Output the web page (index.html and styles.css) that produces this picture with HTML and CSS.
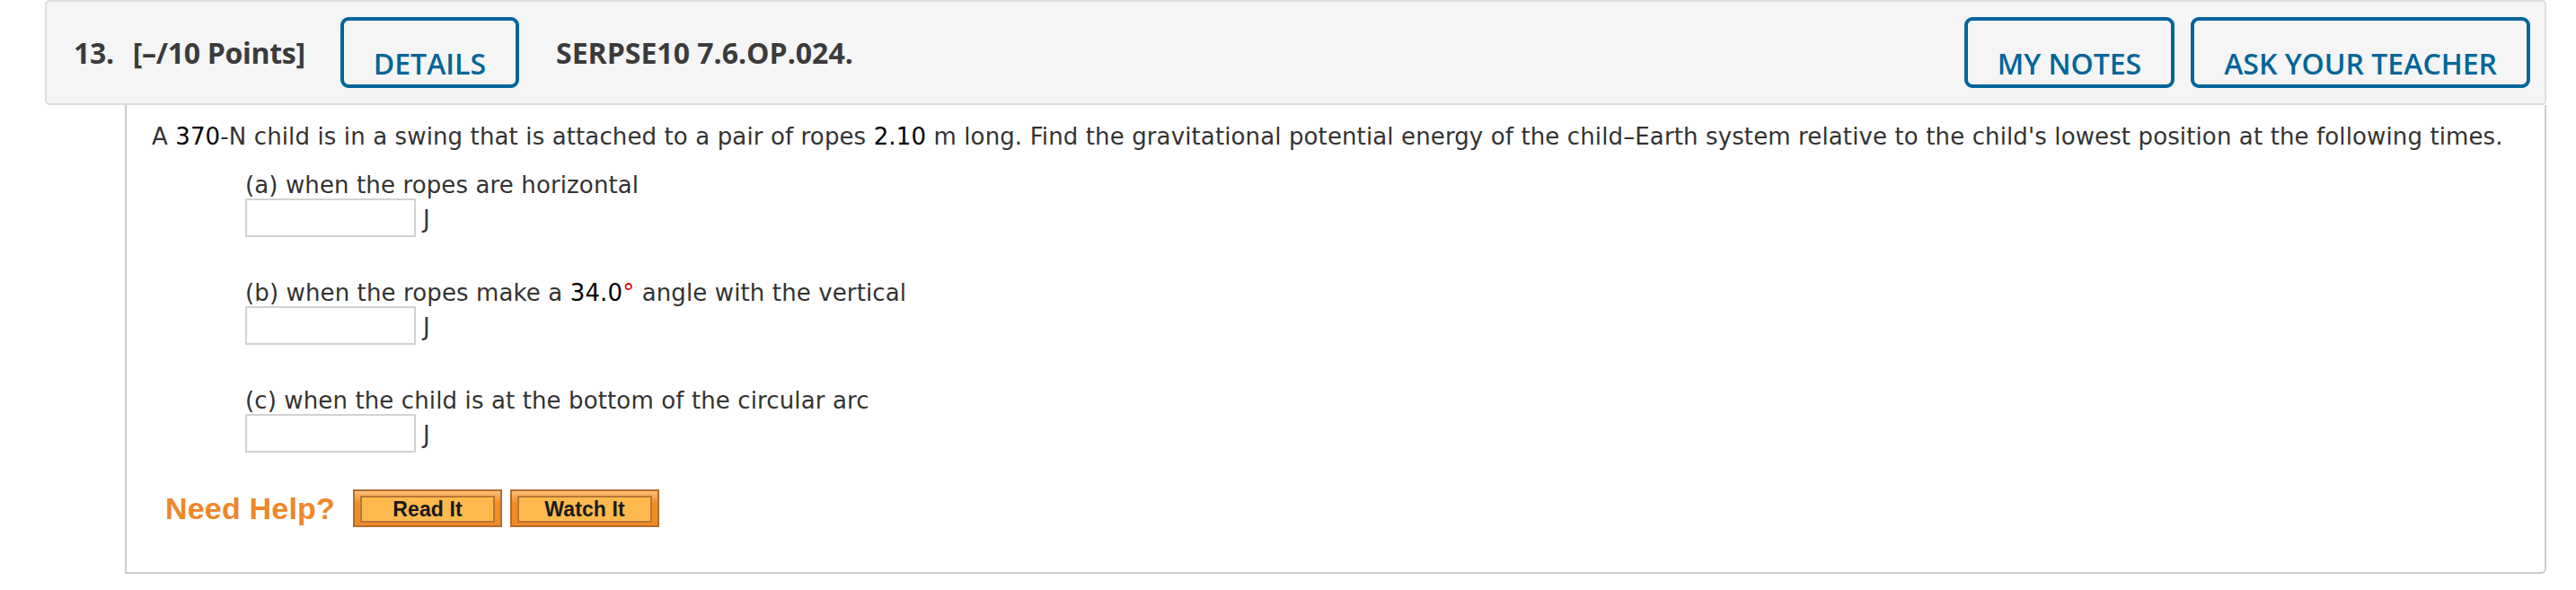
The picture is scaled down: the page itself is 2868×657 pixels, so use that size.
FILE: index.html
```html
<!DOCTYPE html>
<html lang="en">
<head>
<meta charset="utf-8">
<title>Question 13</title>
<link rel="stylesheet" href="styles.css">
</head>
<body>
<div class="question">
  <div class="q-header">
    <div class="q-title">
      <span class="q-num">13.</span>
      <span class="q-points">[–/10 Points]</span>
    </div>
    <button class="outline-btn">DETAILS</button>
    <div class="q-code">SERPSE10 7.6.OP.024.</div>
    <div class="spacer"></div>
    <button class="outline-btn">MY NOTES</button>
    <button class="outline-btn">ASK YOUR TEACHER</button>
  </div>
  <div class="q-body">
    <p class="q-text">A <span class="num">370</span>-N child is in a swing that is attached to a pair of ropes <span class="num">2.10</span> m long. Find the gravitational potential energy of the child–Earth system relative to the child's lowest position at the following times.</p>
    <div class="parts">
      <div class="part">
        <div class="part-label">(a) when the ropes are horizontal</div>
        <div class="answer-row"><span class="answer-box"></span><span class="unit">J</span></div>
      </div>
      <div class="part">
        <div class="part-label">(b) when the ropes make a <span class="num">34.0</span><span class="deg">°</span> angle with the vertical</div>
        <div class="answer-row"><span class="answer-box"></span><span class="unit">J</span></div>
      </div>
      <div class="part">
        <div class="part-label">(c) when the child is at the bottom of the circular arc</div>
        <div class="answer-row"><span class="answer-box"></span><span class="unit">J</span></div>
      </div>
    </div>
    <div class="help-row">
      <span class="need-help">Need Help?</span>
      <span class="help-btn"><span class="help-btn-inner">Read It</span></span>
      <span class="help-btn"><span class="help-btn-inner">Watch It</span></span>
    </div>
  </div>
</div>
</body>
</html>
```
FILE: styles.css
```css
* { box-sizing: border-box; }

body {
  margin: 0;
  background: #ffffff;
  font-family: "DejaVu Sans", Verdana, sans-serif;
  color: #333333;
}

.question {
  margin-left: 50px;
  width: 2785px;
}

.q-header {
  height: 117px;
  background: #f5f5f5;
  border: 2px solid #dddddd;
  border-radius: 5px;
  display: flex;
  align-items: center;
  padding: 0 16px 0 30px;
  font-family: "Open Sans", sans-serif;
}

.q-title {
  display: flex;
  gap: 21px;
  font-size: 32px;
  font-weight: 700;
  color: #3b3b3b;
  letter-spacing: -0.3px;
  margin-right: 39px;
}

.q-code {
  font-size: 32px;
  font-weight: 700;
  color: #3b3b3b;
  margin-left: 41px;
}

.spacer { flex: 1; }

.outline-btn {
  height: 79px;
  padding: 26px 33px 0;
  border: 4px solid #00659a;
  border-radius: 9px;
  background: transparent;
  color: #00659a;
  font-family: "Open Sans", sans-serif;
  font-size: 32px;
  font-weight: 600;
  line-height: 44px;
  display: flex;
  align-items: flex-start;
}

.outline-btn + .outline-btn { margin-left: 18px; }

.q-body {
  margin-left: 89px;
  height: 522px;
  border: 2px solid #cccccc;
  border-top: none;
  border-bottom-right-radius: 6px;
  padding: 20px 0 0 28px;
  font-size: 26px;
  line-height: 30px;
  letter-spacing: 0.12px;
}

.q-text { margin: 0; }

.num { color: #000000; }
.deg { color: #e00000; }

.parts {
  margin-top: 24px;
  padding-left: 104px;
  display: flex;
  flex-direction: column;
  gap: 47px;
}

.answer-row {
  display: flex;
  align-items: center;
  gap: 8px;
  margin-top: 0;
}

.answer-box {
  width: 190px;
  height: 43px;
  border: 2px solid #d2d2d2;
  background: #ffffff;
}

.unit { padding-top: 2px; }

.help-row {
  margin-top: 41px;
  padding-left: 15px;
  display: flex;
  align-items: center;
}

.need-help {
  font-family: "Liberation Sans", Arial, sans-serif;
  font-weight: 700;
  font-size: 34px;
  color: #f0862a;
  margin-right: 20px;
  letter-spacing: 0.2px;
}

.help-btn {
  width: 166px;
  height: 42px;
  border: 2px solid #b36d2c;
  background: linear-gradient(#fcc07a, #f08c26 35%, #f08c26);
  padding: 5px 6px 3px 6px;
  display: flex;
}

.help-btn + .help-btn { margin-left: 9px; }

.help-btn-inner {
  flex: 1;
  border: 2px solid #b97636;
  background: #fdb94d;
  font-family: "Liberation Sans", Arial, sans-serif;
  font-weight: 700;
  font-size: 23px;
  color: #1a1a1a;
  display: flex;
  align-items: center;
  justify-content: center;
  line-height: 1;
}
```
